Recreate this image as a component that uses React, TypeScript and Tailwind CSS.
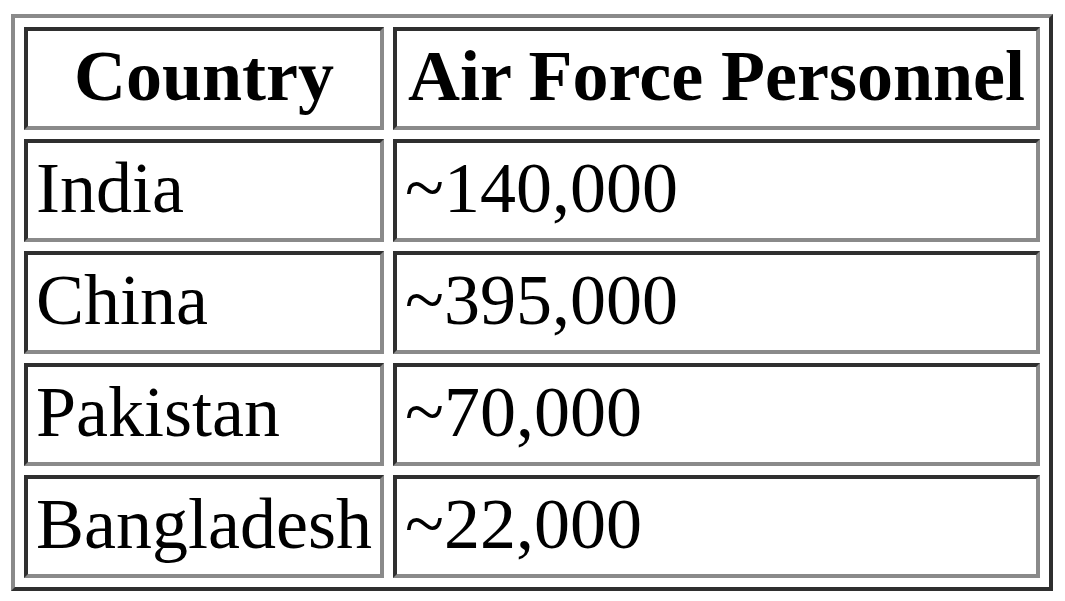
const rows = [
  { country: "India", personnel: "~140,000" },
  { country: "China", personnel: "~395,000" },
  { country: "Pakistan", personnel: "~70,000" },
  { country: "Bangladesh", personnel: "~22,000" },
];

const cell =
  "border-4 border-t-[#2f2f2f] border-l-[#2f2f2f] border-r-[#8a8a8a] border-b-[#8a8a8a] px-[8px] pt-[3px] pb-[8px] leading-[84px] align-middle";

export default function App() {
  return (
    <div className="min-h-screen bg-white pl-[11px] pt-[14px] font-['Liberation_Serif','Times_New_Roman',serif] text-[72px] text-black">
      <table className="border-separate border-spacing-[9px] border-4 border-t-[#8a8a8a] border-l-[#8a8a8a] border-r-[#2f2f2f] border-b-[#2f2f2f]">
        <thead>
          <tr>
            <th className={`${cell} w-[360px] text-center font-bold`}>Country</th>
            <th className={`${cell} w-[647px] text-center font-bold`}>Air Force Personnel</th>
          </tr>
        </thead>
        <tbody>
          {rows.map((r) => (
            <tr key={r.country}>
              <td className={`${cell} text-left`}>{r.country}</td>
              <td className={`${cell} text-left`}>{r.personnel}</td>
            </tr>
          ))}
        </tbody>
      </table>
    </div>
  );
}
